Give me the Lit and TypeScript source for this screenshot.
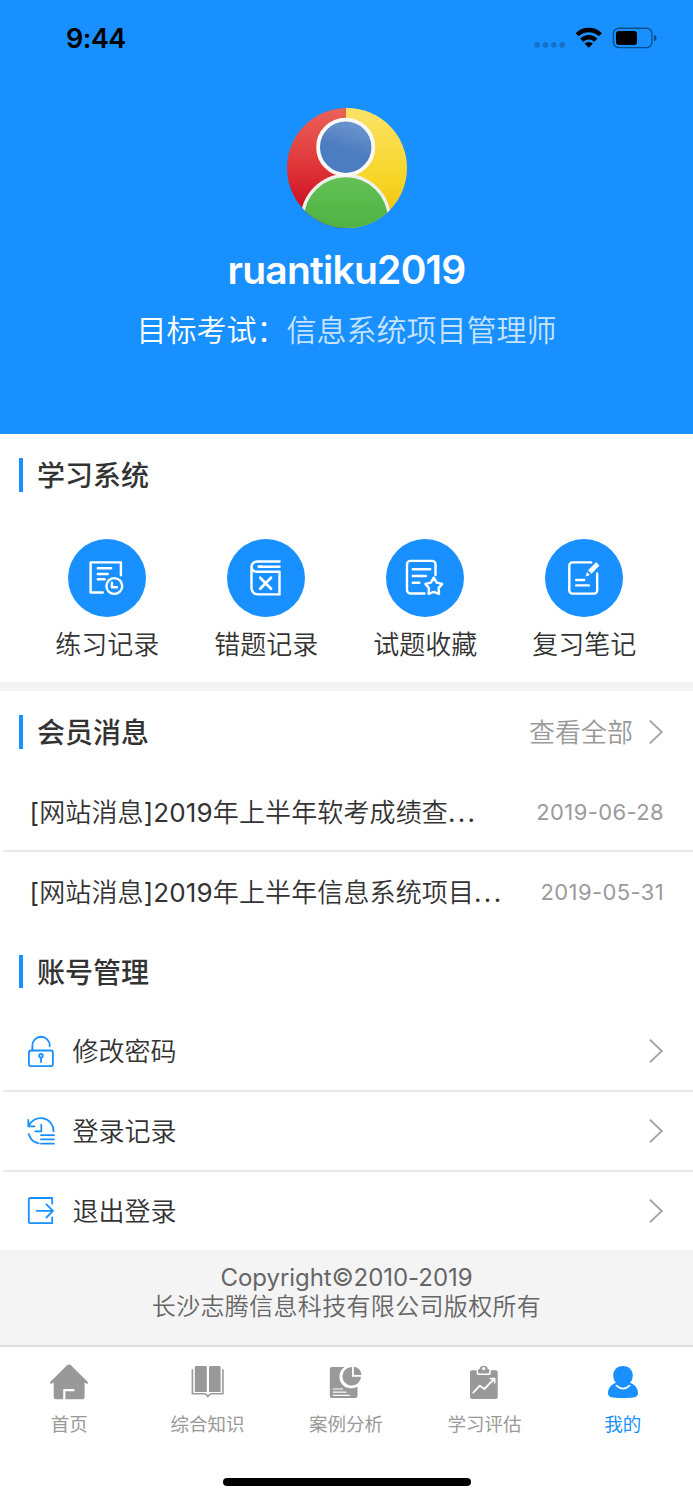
import { LitElement, html, css, svg } from "lit";
import { customElement } from "lit/decorators.js";

const shortcuts = [
  {
    label: "练习记录",
    icon: svg`<path d="M34.8 53.5H22.6V23.4H52.9V36.2M29.8 29.3H43.2M29.8 35H39.8M29.8 40.3H36.6"/><circle cx="46.3" cy="47" r="7.9"/><path d="M43.9 43.8V48.3H49"/>`,
  },
  {
    label: "错题记录",
    icon: svg`<path stroke-linecap="butt" d="M53.5 22.5H30.5A6 5.2 0 0 0 24.5 27.7V49.1A6.3 6.3 0 0 0 30.8 55.4H52.5V32.8H30A5.5 5.1 0 0 1 24.5 27.7M53.5 27.7H33"/><path d="M31.8 27.7H34M33.2 38.8L44 49.8M44 38.8L33.2 49.8" stroke-width="2.7"/>`,
  },
  {
    label: "试题收藏",
    icon: svg`<path d="M38.6 54.5H24.4A3.4 3.4 0 0 1 21 51.1V25.3A3.4 3.4 0 0 1 24.4 21.9H46.1A3.4 3.4 0 0 1 49.5 25.3V36M26.8 30.3H44.2M26.8 37H39.9M26.8 43.7H33.4"/><path d="M47.8 38.6L50.7 43.6L56.2 44.9L52.6 49.1L53 54.9L47.8 52.9L42.6 54.9L43 49.1L39.4 44.9L44.9 43.6Z"/>`,
  },
  {
    label: "复习笔记",
    icon: svg`<path d="M46.2 23.4H27.5A3.2 3.2 0 0 0 24.3 26.6V51.4A3.2 3.2 0 0 0 27.5 54.6H49A3.2 3.2 0 0 0 52.2 51.4V34.5M31.2 41H39.2M31.2 46.4H43.8"/><path class="solid" d="M51.2 23.2L54.4 26.5L46.5 34.8L43 31.3ZM42 33L44.9 35.9L40.6 37.5Z"/>`,
  },
];

const messages = [
  { title: "[网站消息]2019年上半年软考成绩查", date: "2019-06-28" },
  { title: "[网站消息]2019年上半年信息系统项目", date: "2019-05-31" },
];

const account = [
  {
    label: "修改密码",
    icon: svg`<rect x="2.9" y="17.5" width="24" height="15.6" rx="2.2"/><path d="M6.4 17.5V12.4A8.65 8.65 0 0 1 23.7 12.4V13.3M15 25V29"/><circle cx="15" cy="22.8" r="1.8"/>`,
  },
  {
    label: "登录记录",
    icon: svg`<path d="M2.3 7V13.4H8.5M2.8 13A12.9 12.9 0 0 1 27.6 18.3M2.7 21A12.9 12.9 0 0 0 12.7 30.3M15.3 11.7V18.4H9.3M15 22.2H28M15 26.4H28M15 30.6H28"/>`,
  },
  {
    label: "退出登录",
    icon: svg`<path d="M26.2 10.7V5H4A1.2 1.2 0 0 0 2.8 6.2V29A1.2 1.2 0 0 0 4 30.2H26.2V24.4M10.8 17.9H27M20.4 11.3L27 17.9L20.4 24.5"/>`,
  },
];

const tabs = [
  {
    label: "首页",
    icon: svg`<path d="M17.8 1.6Q20 -0.4 22.2 1.6L38.6 17.8Q39.6 19.8 37.6 19.8L35.6 18.4V33.4Q35.6 35.2 33.8 35.2H16.4V27.2H25.4V25H14.2V35.2H6.4Q4.7 35.2 4.7 33.4V18.4L2.4 19.8Q0.4 19.8 1.4 17.8Z"/>`,
  },
  {
    label: "综合知识",
    icon: svg`<path d="M8 2H17.6Q18.8 2 18.8 3.2V28H6.8V3.2Q6.8 2 8 2ZM22.2 2H31.4Q32.6 2 32.6 3.2V28H21V3.2Q21 2 22.2 2Z"/><path fill="none" stroke="currentColor" stroke-width="1.6" d="M4.4 5.2V29.8H16.2Q18 29.9 19.9 32.4Q21.8 29.9 23.6 29.8H34.9V5.2"/>`,
  },
  {
    label: "案例分析",
    icon: svg`<path d="M6 3H18.6A11.4 11.4 0 0 0 31.5 22.4V32Q31.5 34 29.5 34H6Q3.8 34 3.8 32V5Q3.8 3 6 3Z"/><path d="M26 3V12.8H35A9.3 9.3 0 1 1 26 3Z"/><path d="M27.9 2.8A8 8 0 0 1 35.4 11H27.9Z"/><path class="cut" d="M6.8 25H17M6.8 28.2H20.5M6.8 31.4H24"/>`,
  },
  {
    label: "学习评估",
    icon: svg`<path d="M8 6.3H12.6V9.2Q12.6 11 14.4 11H25Q26.8 11 26.8 9.2V6.3H31.7Q33.7 6.3 33.7 8.3V33Q33.7 35 31.7 35H8Q6 35 6 33V8.3Q6 6.3 8 6.3Z"/><path fill-rule="evenodd" d="M14 6.2Q14 5 15.6 5A4.2 4.2 0 0 1 23.8 5Q25.3 5 25.3 6.2V8Q25.3 9.4 24 9.4H15.4Q14 9.4 14 8ZM19.7 2.9A1.7 1.7 0 1 0 19.7 6.3A1.7 1.7 0 1 0 19.7 2.9Z"/><path class="cut bold" d="M9.3 28.6L15.8 21.6L20.3 25L30 15.2M26.5 14.6H30.6V18.6"/>`,
  },
  {
    label: "我的",
    active: true,
    icon: svg`<path d="M20 2C26 2 29.8 6.2 29.8 11.4Q29.8 15.8 27 18.7C32 20.4 35 24.5 35 29Q35 32.2 31.8 33.2Q29 34 20 34Q11 34 8.2 33.2Q5 32.2 5 29C5 24.5 8 20.4 13 18.7Q10.2 15.8 10.2 11.4C10.2 6.2 14 2 20 2Z"/><path class="cut bold" d="M13.4 21.7Q20 27.6 26.6 21.7"/>`,
  },
];

const chevron = html`<svg class="chevron" width="16" height="26" viewBox="0 0 16 26"><path d="M1.8 1.6L13.8 13L1.8 24.4" fill="none" stroke="#a3a3a3" stroke-width="1.9"/></svg>`;

// Latin runs get a regular weight beside the lighter Chinese text.
const mixed = (text: string) =>
  text.split(/([\x20-\x7e]+)/).map((part, i) => (i % 2 ? html`<span class="latin">${part}</span>` : part));

@customElement("app-root")
export class AppRoot extends LitElement {
  static styles = css`
    :host {
      display: flex;
      flex-direction: column;
      box-sizing: border-box;
      width: 693px;
      height: 1500px;
      overflow: hidden;
      background: #fff;
      color: #333;
      font-family: Inter, "Noto Sans CJK SC", sans-serif;
    }
    svg { display: block; flex: none; }
    .hero {
      height: 434.3px;
      flex: none;
      background: #1890ff;
      display: flex;
      flex-direction: column;
      align-items: center;
    }
    .status {
      align-self: stretch;
      display: flex;
      justify-content: space-between;
      align-items: center;
      height: 76px;
      padding: 0 36px 0 66px;
      margin-bottom: 32px;
      color: #000;
      font-size: 27px;
      font-weight: 600;
      letter-spacing: -0.5px;
    }
    .name {
      margin-top: 18px;
      height: 48px;
      line-height: 48px;
      font-size: 39px;
      font-weight: 600;
      letter-spacing: -0.75px;
      color: #fff;
    }
    .target {
      margin-top: 16px;
      line-height: 40px;
      font-size: 30px;
      font-weight: 350;
      color: #fff;
      white-space: nowrap;
    }
    .target span { color: #c8e3ff; }
    .head {
      display: flex;
      align-items: center;
      height: 81.7px;
      flex: none;
      box-sizing: border-box;
      padding: 0 29px 0 18.5px;
    }
    .bar { width: 4.5px; height: 33.5px; background: #1890ff; margin-right: 14px; }
    .title { flex: 1; font-size: 28px; font-weight: 500; line-height: 40px; padding-top: 2.5px; }
    .more { font-size: 26px; font-weight: 350; color: #999; margin-right: 15px; line-height: 40px; padding-top: 2px; }
    .grid {
      display: grid;
      grid-template-columns: repeat(4, 159px);
      justify-content: center;
      height: 166px;
      flex: none;
      box-sizing: border-box;
      padding-top: 23px;
      padding-right: 1.5px;
    }
    .shortcut { display: flex; flex-direction: column; align-items: center; font-size: 26px; font-weight: 350; line-height: 40px; gap: 8px; }
    .disc { fill: none; stroke: #fff; stroke-width: 2.4; stroke-linecap: round; stroke-linejoin: round; }
    .disc .bg { fill: #1890ff; stroke: none; }
    .disc .solid { fill: #fff; stroke: none; }
    .band { height: 9px; flex: none; background: #f4f4f4; }
    .row {
      display: flex;
      align-items: center;
      box-sizing: border-box;
      height: 79.8px;
      flex: none;
      padding: 0 27px;
      margin-left: 2.5px;
      font-size: 26px;
      white-space: nowrap;
      border-bottom: 2px solid #e7e7e7;
    }
    .row.last { border-bottom: 0; height: 78.2px; }
    .text { flex: 1; font-weight: 350; line-height: 40px; padding-top: 2px; }
    .message { letter-spacing: 0.13px; }
    .latin { font-weight: 400; }
    .dots { letter-spacing: 2.3px; font-weight: 400; }
    .date { font-size: 22px; color: #9b9b9b; letter-spacing: 0.38px; margin-right: 2px; }
    .item { padding: 0 29px 0 23.5px; }
    .item .text { margin-left: 16.5px; }
    .line { fill: none; stroke: #1890ff; stroke-width: 1.8; stroke-linecap: round; stroke-linejoin: round; }
    .copyright {
      flex: none;
      box-sizing: border-box;
      height: 95px;
      padding-top: 13.3px;
      background: #f4f4f4;
      color: #666;
      text-align: center;
      font-size: 24px;
      font-weight: 350;
      line-height: 29px;
      letter-spacing: 0.33px;
    }
    .copyright .latin { letter-spacing: -0.04px; }
    .tabs {
      display: grid;
      grid-template-columns: repeat(5, 1fr);
      height: 132.6px;
      flex: none;
      box-sizing: border-box;
      border-top: 2px solid #ddd;
      padding-top: 16.4px;
      padding-right: 1px;
    }
    .tab { display: flex; flex-direction: column; align-items: center; gap: 10px; color: #999; font-size: 18.5px; line-height: 28px; }
    .tab.active { color: #1890ff; }
    .tab svg { fill: currentColor; }
    .cut { fill: none; stroke: #fff; stroke-width: 1.2; }
    .cut.bold { stroke-width: 1.8; stroke-linecap: round; stroke-linejoin: round; }
    .home { align-self: center; flex: none; width: 248px; height: 8.7px; border-radius: 5px; background: #000; }
  `;

  private head(title: string, more?: unknown) {
    return html`<div class="head"><div class="bar"></div><div class="title">${title}</div>${more ?? ""}</div>`;
  }

  render() {
    return html`
      <div class="hero">
        <div class="status">
          <span>9:44</span>
          <svg width="124" height="24" viewBox="533 26 124 24">
            <g fill="#000" fill-opacity=".22">
              <circle cx="537.2" cy="44.8" r="2.9"/><circle cx="545.5" cy="44.8" r="2.9"/><circle cx="553.8" cy="44.8" r="2.9"/><circle cx="562.2" cy="44.8" r="2.9"/>
            </g>
            <g fill="none" stroke="#000" stroke-width="4.4">
              <path d="M577.2 34.8A16.6 16.6 0 0 1 600.4 34.8"/>
              <path d="M581.8 40.2A9.8 9.8 0 0 1 595.8 40.2"/>
            </g>
            <path d="M588.8 47.8L584.6 43.6Q588.8 40.4 593 43.6Z"/>
            <rect x="613.4" y="28.2" width="38.6" height="19.4" rx="5.6" fill="none" stroke="#000" stroke-opacity=".45" stroke-width="1.4"/>
            <rect x="616" y="31" width="21" height="14" rx="3"/>
            <path d="M654.2 34.4Q656.6 35.6 656.6 37.9Q656.6 40.2 654.2 41.4Z" fill-opacity=".5"/>
          </svg>
        </div>
        <svg width="120" height="120" viewBox="0 0 120 120">
          <defs>
            <clipPath id="round"><circle cx="60" cy="60" r="60"/></clipPath>
            <linearGradient id="red" x2="0" y2="1"><stop offset="0" stop-color="#ea6258"/><stop offset=".5" stop-color="#df3438"/><stop offset=".85" stop-color="#cc0c20"/></linearGradient>
            <linearGradient id="yellow" x2="0" y2="1"><stop offset="0" stop-color="#fbe266"/><stop offset=".6" stop-color="#f7d526"/><stop offset=".9" stop-color="#f2c313"/></linearGradient>
            <linearGradient id="blue" x1=".7" y1="0" x2=".4" y2="1"><stop offset="0" stop-color="#7199cf"/><stop offset=".55" stop-color="#4d7dc0"/><stop offset="1" stop-color="#4a7dc3"/></linearGradient>
            <linearGradient id="green" x2="0" y2="1"><stop offset="0" stop-color="#66c157"/><stop offset=".4" stop-color="#55b748"/><stop offset=".6" stop-color="#51b146"/></linearGradient>
          </defs>
          <g clip-path="url(#round)">
            <rect width="59.2" height="120" fill="url(#red)"/>
            <rect x="59" width="61" height="120" fill="url(#yellow)"/>
            <circle cx="58.8" cy="111" r="43.4" fill="url(#green)" stroke="#eef0ea" stroke-width="3.2"/>
            <circle cx="58.7" cy="39.2" r="27.6" fill="url(#blue)" stroke="#f8f8f6" stroke-width="3.8"/>
          </g>
        </svg>
        <div class="name">ruantiku2019</div>
        <div class="target">目标考试：<span>信息系统项目管理师</span></div>
      </div>

      ${this.head("学习系统")}
      <div class="grid">
        ${shortcuts.map((s) => html`<div class="shortcut">
          <svg class="disc" width="78" height="78" viewBox="0 0 78 78"><circle class="bg" cx="39" cy="39" r="39"/>${s.icon}</svg>
          <span>${s.label}</span>
        </div>`)}
      </div>
      <div class="band"></div>

      ${this.head("会员消息", html`<span class="more">查看全部</span>${chevron}`)}
      ${messages.map((m, i) => html`<div class="row ${i === messages.length - 1 ? "last" : ""}">
        <span class="text message">${mixed(m.title)}<span class="dots">...</span></span><span class="date">${m.date}</span>
      </div>`)}

      ${this.head("账号管理")}
      ${account.map((a, i) => html`<div class="row item ${i === account.length - 1 ? "last" : ""}">
        <svg class="line" width="30" height="36" viewBox="0 0 30 36">${a.icon}</svg>
        <span class="text">${a.label}</span>${chevron}
      </div>`)}

      <div class="copyright"><span class="latin">Copyright©2010-2019</span><br>长沙志腾信息科技有限公司版权所有</div>
      <div class="tabs">
        ${tabs.map((t) => html`<div class="tab ${t.active ? "active" : ""}">
          <svg width="40" height="36" viewBox="0 0 40 36">${t.icon}</svg><span>${t.label}</span>
        </div>`)}
      </div>
      <div class="home"></div>
    `;
  }
}
